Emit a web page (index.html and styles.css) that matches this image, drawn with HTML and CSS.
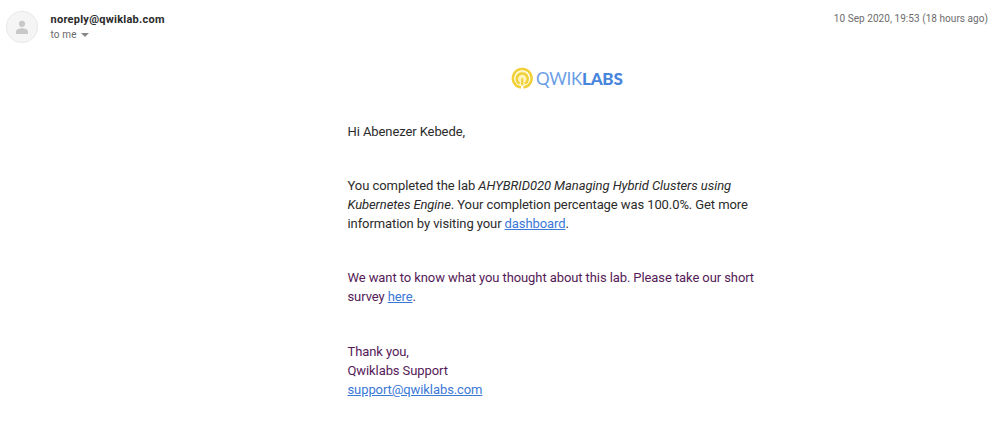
FILE: index.html
```html
<!DOCTYPE html>
<html lang="en">
<head>
<meta charset="utf-8">
<title>Qwiklabs</title>
<link rel="stylesheet" href="styles.css">
</head>
<body>
<header class="head">
  <svg class="avatar" viewBox="0 0 34 34"><circle cx="17" cy="17" r="15.700" fill="#f5f5f5" stroke="#e9e9e9"/><circle cx="17" cy="13.800" r="3.100" fill="#c8c8c8"/><path d="M11 24v-2.500c0-2 4-3.200 6-3.200s6 1.200 6 3.200V24z" fill="#c8c8c8"/></svg>
  <div class="who">
    <div class="sender">noreply@qwiklab.com</div>
    <div class="to"><span>to me</span><i class="caret"></i></div>
  </div>
  <time class="date">10 Sep 2020, 19:53 (18 hours ago)</time>
</header>
<main class="mail">
  <div class="logo">
    <svg class="mark" viewBox="0 0 22 22" fill="none" stroke="#f1cf35"><circle cx="11" cy="11" r="7" fill="#fdf3bd" stroke="none"/><path d="M9.800 20A9.100 9.100 0 1 1 12.200 20" stroke-width="2.500"/><path d="M8.300 16.300A5.400 5.400 0 1 1 13.700 16.300" stroke-width="2.400"/><path d="M11 11v7" stroke-width="2"/></svg>
    <span class="word">QWIK<b>LABS</b></span>
  </div>
  <p>Hi Abenezer Kebede,</p>
  <p><span class="course">You completed the lab <em>AHYBRID020 Managing Hybrid Clusters using</em></span><br><em>Kubernetes Engine</em>. Your completion percentage was 100.0%. Get more<br>information by visiting your <a href="#">dashboard</a>.</p>
  <p class="quoted survey">We want to know what you thought about this lab. Please take our short<br>survey <a href="#">here</a>.</p>
  <p class="quoted">Thank you,<br>Qwiklabs Support<br><a href="#">support@qwiklabs.com</a></p>
</main>
</body>
</html>
```
FILE: styles.css
```css
body { margin: 0; background: #fff; color: #2b2b2b; font-family: Roboto, sans-serif; height: 434px; overflow: hidden; }
.head { display: flex; height: 67px; padding: 10px 5px 0 5px; box-sizing: border-box; }
.avatar { width: 34px; height: 34px; flex: none; }
.who { margin-left: 11.5px; flex: 1; }
.sender { font-size: 11px; font-weight: 700; line-height: 19px; letter-spacing: .25px; }
.to { display: flex; align-items: center; font-size: 10px; line-height: 12px; color: #6a6a6a; letter-spacing: .15px; }
.caret { margin-left: 4.500px; border: 3.5px solid transparent; border-width: 4px 4px 0; border-top-color: #888; }
.date { font-size: 10px; line-height: 17px; color: #6c6c6c; letter-spacing: .05px; }
.mail { width: 440px; margin-left: 347.5px; font-size: 13px; line-height: 19px; letter-spacing: -.09px; white-space: nowrap; }
.logo { display: flex; align-items: center; height: 23px; margin: 0 0 32px 163px; }
.mark { width: 22.5px; height: 22.5px; }
.word { margin-left: 3px; font-family: Lato, sans-serif; font-size: 17px; letter-spacing: -.25px; color: #6b9ee6; }
.word b { font-weight: 900; color: #4885dd; }
.mail p { margin: 0 0 35px; }
.course { letter-spacing: -.06px; }
.quoted { color: #551a58; }
.mail .survey { margin-bottom: 36px; }
.mail a { color: #3b78d8; text-decoration: underline; }
```
